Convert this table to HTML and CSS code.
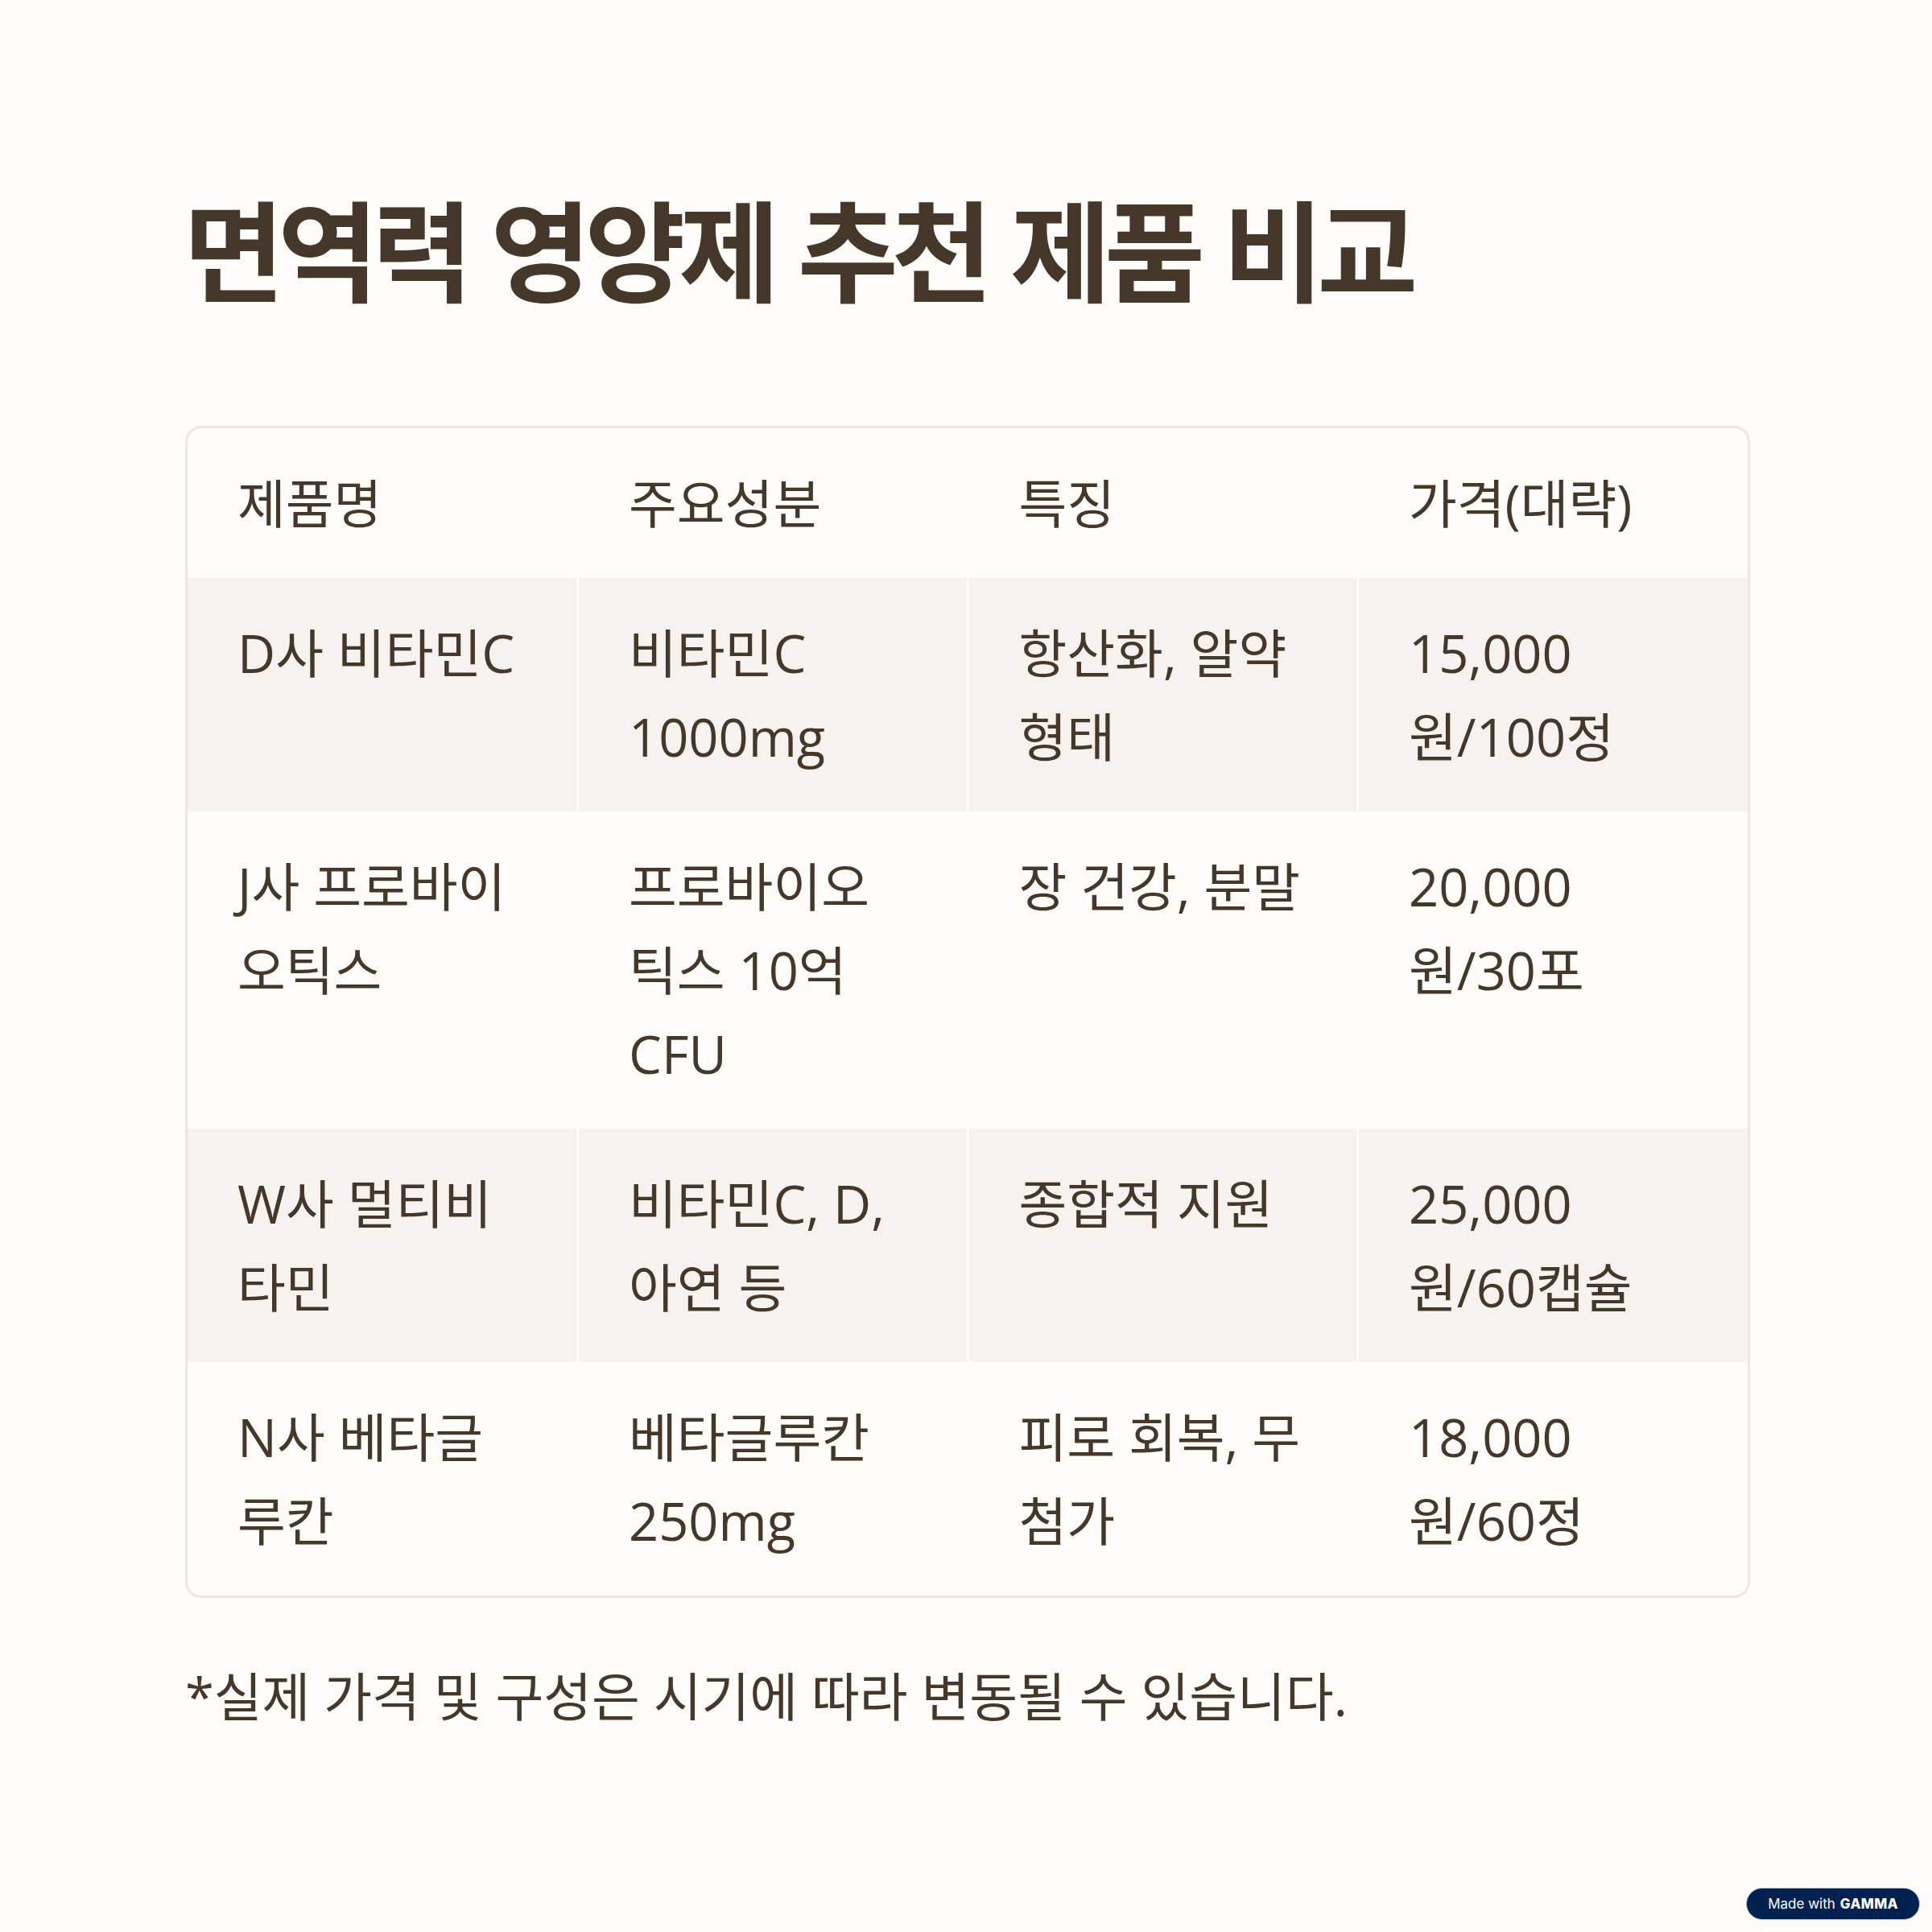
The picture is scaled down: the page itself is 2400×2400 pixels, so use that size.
FILE: index.html
```html
<!DOCTYPE html>
<html lang="ko">
<head>
<meta charset="utf-8">
<title>면역력 영양제 추천 제품 비교</title>
<link rel="stylesheet" href="styles.css">
</head>
<body>
<main class="page">
  <h1 class="title">면역력 영양제 추천 제품 비교</h1>
  <div class="table-card">
    <table class="compare">
      <thead>
        <tr>
          <th>제품명</th>
          <th>주요성분</th>
          <th>특징</th>
          <th>가격(대략)</th>
        </tr>
      </thead>
      <tbody>
        <tr class="shaded">
          <td>D사 비타민C</td>
          <td>비타민C<br>1000mg</td>
          <td>항산화, 알약<br>형태</td>
          <td>15,000<br>원/100정</td>
        </tr>
        <tr>
          <td>J사 프로바이<br>오틱스</td>
          <td>프로바이오<br>틱스 10억<br>CFU</td>
          <td>장 건강, 분말</td>
          <td>20,000<br>원/30포</td>
        </tr>
        <tr class="shaded">
          <td>W사 멀티비<br>타민</td>
          <td>비타민C, D,<br>아연 등</td>
          <td>종합적 지원</td>
          <td>25,000<br>원/60캡슐</td>
        </tr>
        <tr>
          <td>N사 베타글<br>루칸</td>
          <td>베타글루칸<br>250mg</td>
          <td>피로 회복, 무<br>첨가</td>
          <td>18,000<br>원/60정</td>
        </tr>
      </tbody>
    </table>
  </div>
  <p class="note">*실제 가격 및 구성은 시기에 따라 변동될 수 있습니다.</p>
</main>
<a class="badge" href="#">Made with <span class="badge-brand">GAMMA</span></a>
</body>
</html>
```
FILE: styles.css
```css
html, body {
  margin: 0;
  padding: 0;
  background: #fffcfa;
}

body {
  width: 2400px;
  height: 2400px;
  position: relative;
  color: #45372a;
  font-family: "Open Sans", "Noto Sans CJK KR", sans-serif;
}

.page {
  box-sizing: border-box;
  width: 2400px;
  padding: 224px 226px 0 230px;
}

.title {
  margin: 0 0 0 -2px;
  font-family: "Noto Sans CJK KR", sans-serif;
  font-weight: 700;
  font-size: 136px;
  line-height: 1.2;
  letter-spacing: -0.059em;
  color: #45372a;
}

.table-card {
  margin-top: 142px;
  border: 3px solid #ebe7e3;
  border-radius: 20px;
  overflow: hidden;
}

.compare {
  width: 100%;
  border-collapse: collapse;
  table-layout: fixed;
}

.compare th,
.compare td {
  width: 25%;
  box-sizing: border-box;
  padding: 41px 30px 41px 62px;
  vertical-align: top;
  text-align: left;
  white-space: nowrap;
  font-weight: 400;
  font-size: 65px;
  line-height: 104px;
  color: #45372a;
  border-left: 3px solid #fffcfa;
}

.compare th:first-child,
.compare td:first-child {
  border-left: none;
}

.compare .shaded td {
  background: #f5f2ef;
}

.note {
  margin: 70px 0 0 0;
  font-size: 65px;
  line-height: 104px;
  color: #45372a;
}

.badge {
  position: absolute;
  right: 15px;
  bottom: 15px;
  height: 38px;
  padding: 0 26px;
  display: flex;
  align-items: center;
  gap: 6px;
  background: #00204f;
  border: 1px solid #a8c4ef;
  border-radius: 20px;
  color: #ffffff;
  text-decoration: none;
  font-family: Inter, "Liberation Sans", sans-serif;
  font-size: 17px;
  font-weight: 400;
}

.badge-brand {
  font-weight: 800;
  font-size: 17px;
  letter-spacing: 0.02em;
}
```
